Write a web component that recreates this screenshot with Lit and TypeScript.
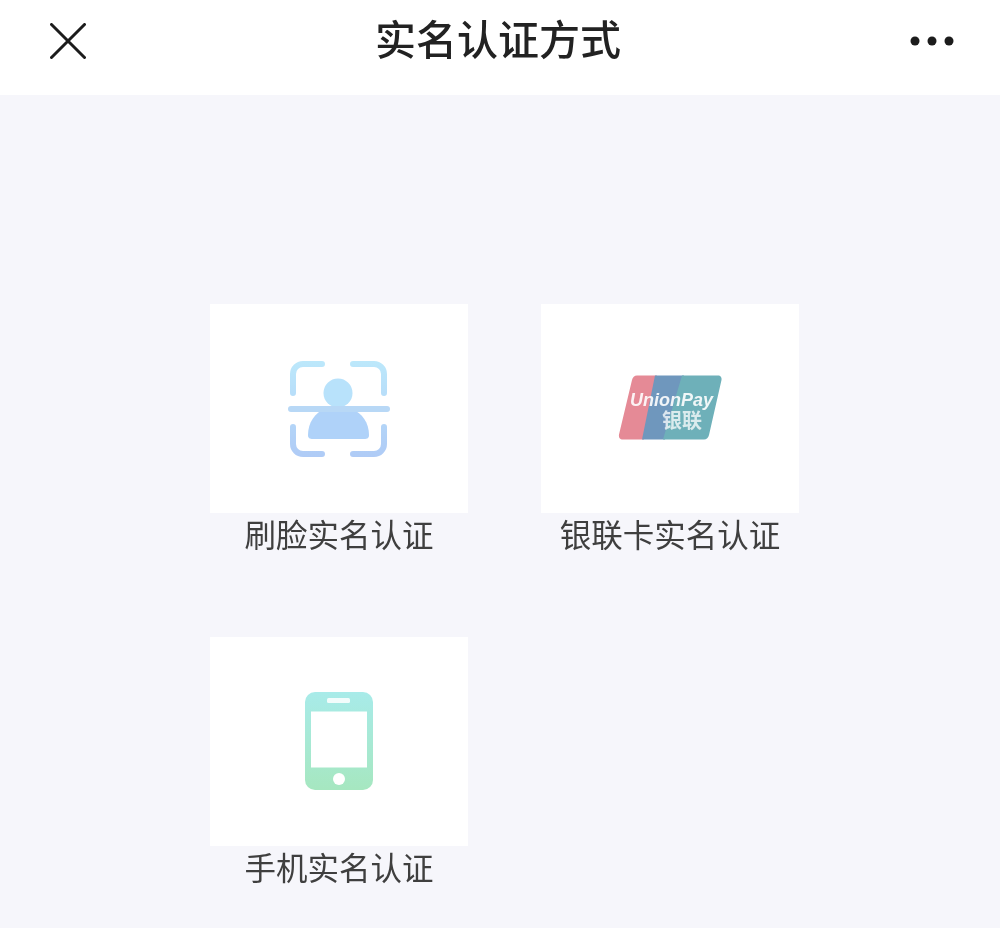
import { LitElement, html, css, svg } from 'lit';
import { customElement } from 'lit/decorators.js';

const FACE_ICON = svg`
  <svg width="104" height="104" viewBox="0 0 104 104">
    <defs>
      <linearGradient id="face-grad" gradientUnits="userSpaceOnUse" x1="0" y1="4" x2="0" y2="100">
        <stop offset="0%" stop-color="#bce8fb" />
        <stop offset="100%" stop-color="#afcbf6" />
      </linearGradient>
    </defs>
    <g fill="none" stroke="url(#face-grad)" stroke-width="6" stroke-linecap="round">
      <path d="M6 36V17a10 10 0 0 1 10-10h19" />
      <path d="M66 7h21a10 10 0 0 1 10 10v19" />
      <path d="M6 70v17a10 10 0 0 0 10 10h19" />
      <path d="M97 70v17a10 10 0 0 1-10 10H66" />
    </g>
    <circle cx="51" cy="36" r="14.500" fill="#b8e2fb" />
    <path fill="#afd2f9" d="M38 52h26c11 3 18 14 18 26 0 3-1.500 4-5 4H26c-3.500 0-5-1-5-4 0-12 7-23 17-26z" />
    <rect x="1" y="49" width="102" height="6" rx="3" fill="#b8d8f6" />
  </svg>
`;

const UNIONPAY_ICON = svg`
  <svg width="106" height="68" viewBox="0 0 106 68">
    <path fill="#e58a96" d="M20 .5h20L27 64.500H6c-3 0-4.500-2-4-5L15 5c.5-2.500 2.500-4.500 5-4.500z" />
    <path fill="#6f97bd" d="M38 .5h29L48 64.500H25z" />
    <path fill="#6eb0b9" d="M65 .5h36c2.500 0 4 2 3.500 4.500L92 60c-.5 2.500-2.500 4.500-5 4.500H46z" />
    <text x="13" y="30.500" fill="#fff" opacity=".9" font-size="18" font-family="'Liberation Sans', sans-serif" font-weight="700" font-style="italic" textLength="83" lengthAdjust="spacing">UnionPay</text>
    <text x="45" y="52.500" fill="#fff" opacity=".75" font-size="20" font-family="'Noto Sans CJK SC', sans-serif" font-weight="700">银联</text>
  </svg>
`;

const PHONE_ICON = svg`
  <svg width="68" height="100" viewBox="0 0 68 100">
    <defs>
      <linearGradient id="phone-grad" x1="0" y1="0" x2="0" y2="1">
        <stop offset="0%" stop-color="#a8ebe9" />
        <stop offset="100%" stop-color="#a6e7c0" />
      </linearGradient>
    </defs>
    <rect x="0" y="0" width="68" height="98" rx="10" fill="url(#phone-grad)" />
    <rect x="6" y="19.500" width="56" height="56" fill="#fff" />
    <rect x="22" y="6" width="23" height="5" rx="1.500" fill="#fff" fill-opacity=".85" />
    <circle cx="34" cy="87" r="6" fill="#fff" />
  </svg>
`;

const METHODS = [
  { label: '刷脸实名认证', icon: FACE_ICON },
  { label: '银联卡实名认证', icon: UNIONPAY_ICON },
  { label: '手机实名认证', icon: PHONE_ICON },
];

@customElement('app-root')
export class AppRoot extends LitElement {
  static styles = css`
    :host {
      display: block;
      width: 1000px;
      height: 928px;
      overflow: hidden;
      background: #f6f6fb;
      font-family: 'Liberation Sans', 'Noto Sans CJK SC', sans-serif;
    }

    .header {
      height: 95px;
      background: #fff;
      display: flex;
      align-items: center;
      justify-content: space-between;
      padding: 0 46px 13px 50px;
      box-sizing: border-box;
    }

    .header svg {
      display: block;
    }

    .title {
      font-size: 41px;
      font-weight: 500;
      color: #222;
      line-height: 1;
      margin-top: -7px;
      filter: blur(0.4px);
      font-family: 'Noto Sans CJK SC', sans-serif;
    }

    .grid {
      display: grid;
      grid-template-columns: 258px 258px;
      column-gap: 73px;
      row-gap: 0;
      grid-auto-rows: 333px;
      padding: 209px 0 0 210px;
    }

    .method {
      display: flex;
      flex-direction: column;
      align-items: center;
    }

    .tile {
      width: 258px;
      height: 209px;
      background: #fff;
      display: flex;
      align-items: center;
      justify-content: center;
      flex: none;
    }

    .tile svg {
      display: block;
      filter: blur(0.7px);
    }

    .label {
      margin-top: -1px;
      font-size: 31.500px;
      line-height: 42px;
      color: #3f3f3f;
      white-space: nowrap;
      filter: blur(0.4px);
      font-family: 'Noto Sans CJK SC', sans-serif;
    }
  `;

  render() {
    return html`
      <div class="header">
        <svg width="36" height="36" viewBox="0 0 36 36">
          <path d="M1.500 1.500 34.500 34.500M34.500 1.500 1.500 34.500" fill="none" stroke="#1c1c1c" stroke-width="3" stroke-linecap="round" />
        </svg>
        <div class="title">实名认证方式</div>
        <svg width="44" height="12" viewBox="0 0 44 12">
          <circle cx="5" cy="6" r="4.500" fill="#1c1c1c" />
          <circle cx="22" cy="6" r="4.500" fill="#1c1c1c" />
          <circle cx="39" cy="6" r="4.500" fill="#1c1c1c" />
        </svg>
      </div>
      <div class="grid">
        ${METHODS.map(
          (m) => html`
            <div class="method">
              <div class="tile">${m.icon}</div>
              <div class="label">${m.label}</div>
            </div>
          `
        )}
      </div>
    `;
  }
}

declare global {
  interface HTMLElementTagNameMap {
    'app-root': AppRoot;
  }
}
